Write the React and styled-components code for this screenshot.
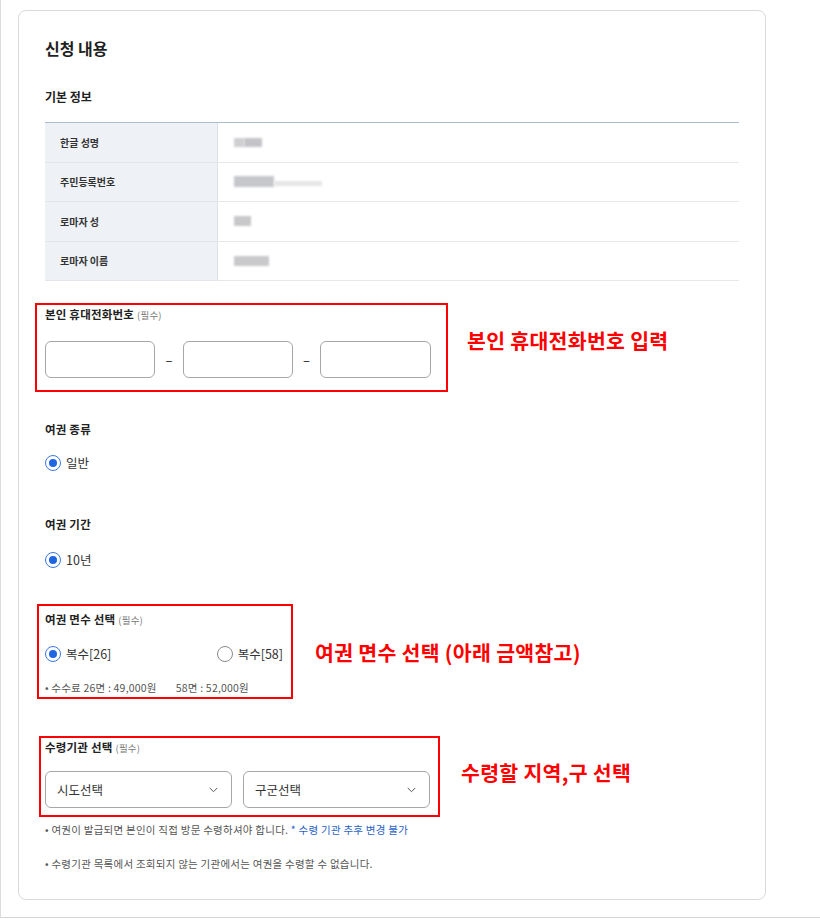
import React from "react";
import styled, { createGlobalStyle } from "styled-components";

const GlobalStyle = createGlobalStyle`
  html, body {
    margin: 0;
    padding: 0;
    background: #ffffff;
  }
  body {
    font-family: "Noto Sans CJK KR", "Noto Sans", "Liberation Sans", sans-serif;
    color: #222;
  }
  * {
    box-sizing: border-box;
  }
`;

const Page = styled.div`
  width: 820px;
  height: 918px;
  border-left: 1px solid #dcdcdc;
  border-bottom: 1px solid #d6d6d6;
  padding: 10px 0 0 17px;
`;

const Card = styled.section`
  width: 748px;
  height: 890px;
  border: 1px solid #dadada;
  border-radius: 8px;
  padding: 24px 26px 0 26px;
  background: #fff;
`;

const Title = styled.h2`
  margin: 0;
  font-size: 16px;
  line-height: 26px;
  font-weight: 700;
  color: #1f1f1f;
`;

const SubTitle = styled.h3`
  margin: 26px 0 0;
  font-size: 12px;
  line-height: 20px;
  font-weight: 700;
  color: #222;
`;

const InfoTable = styled.div`
  margin-top: 15px;
  border-top: 1px solid #a9bcd2;
  display: grid;
  grid-template-columns: 173px 1fr;
`;

const Label = styled.div`
  height: 39.5px;
  background: #eef1f5;
  border-right: 1px solid #dde2ea;
  border-bottom: 1px solid #e2e5ea;
  padding-left: 15px;
  display: flex;
  align-items: center;
  font-size: 10px;
  font-weight: 700;
  color: #333;
`;

const Value = styled.div`
  height: 39.5px;
  border-bottom: 1px solid #e8e8e8;
  padding-left: 16px;
  display: flex;
  align-items: center;
`;

const Blur = styled.span`
  display: inline-block;
  width: ${(p) => p.w}px;
  height: ${(p) => p.h || 9}px;
  background: ${(p) => p.c || "#c9c9cc"};
  filter: blur(1.2px);
  margin-top: ${(p) => p.mt || 0}px;
`;

const AnnotRow = styled.div`
  display: flex;
  align-items: flex-start;
  margin-top: ${(p) => p.mt}px;
`;

const Highlight = styled.div`
  width: ${(p) => p.w}px;
  margin-left: ${(p) => -p.off}px;
  border: 2px solid #ff0000;
  padding: ${(p) => p.pt}px 8px ${(p) => p.pb}px ${(p) => p.off - 2}px;
  flex-shrink: 0;
`;

const Annotation = styled.div`
  margin-left: ${(p) => p.ml}px;
  margin-top: ${(p) => p.mt}px;
  color: #ff0000;
  font-size: 20.5px;
  line-height: 26px;
  font-weight: 700;
  white-space: nowrap;
  letter-spacing: 0.3px;
`;

const FieldLabel = styled.div`
  font-size: 11.5px;
  line-height: 18px;
  font-weight: 700;
  color: #222;
  letter-spacing: 0.2px;
  margin-top: ${(p) => p.mt || 0}px;
`;

const Req = styled.span`
  font-size: 9.5px;
  font-weight: 400;
  color: #777;
  margin-left: 3px;
`;

const PhoneRow = styled.div`
  margin-top: 17px;
  display: grid;
  grid-template-columns: 110px 28px 110px 27px 111px;
  align-items: center;
`;

const TextInput = styled.input`
  height: 37px;
  width: 100%;
  border: 1px solid #a6a6a6;
  border-radius: 6px;
  background: #fff;
  outline: none;
  font-family: inherit;
`;

const Dash = styled.span`
  text-align: center;
  font-size: 13px;
  color: #222;
`;

const RadioRow = styled.div`
  margin-top: ${(p) => p.mt}px;
  display: flex;
  align-items: center;
  justify-content: ${(p) => (p.spread ? "space-between" : "flex-start")};
`;

const RadioItem = styled.label`
  display: flex;
  align-items: center;
  gap: 5px;
  font-size: 12.5px;
  line-height: 16px;
  color: #333;
`;

const Circle = styled.span`
  width: 16px;
  height: 16px;
  border-radius: 50%;
  border: 1.5px solid ${(p) => (p.on ? "#3c78e6" : "#8a8a8a")};
  display: flex;
  align-items: center;
  justify-content: center;
  flex-shrink: 0;

  &::after {
    content: "";
    width: 8px;
    height: 8px;
    border-radius: 50%;
    background: #1f64e0;
    display: ${(p) => (p.on ? "block" : "none")};
  }
`;

const Fee = styled.div`
  margin-top: 18px;
  font-size: 10.5px;
  line-height: 16px;
  color: #555;
  display: flex;
  gap: 19px;
  letter-spacing: 0.2px;
`;

const SelectRow = styled.div`
  margin-top: 14px;
  display: grid;
  grid-template-columns: 187px 187px;
  gap: 11px;
`;

const Select = styled.div`
  height: 37px;
  border: 1px solid #a6a6a6;
  border-radius: 6px;
  padding: 0 13px 0 11px;
  display: flex;
  align-items: center;
  justify-content: space-between;
  font-size: 12.5px;
  color: #333;
`;

const Note = styled.p`
  margin: ${(p) => p.mt}px 0 0;
  font-size: 10.5px;
  line-height: 14px;
  color: #555;
  letter-spacing: 0.25px;
`;

const Blue = styled.span`
  color: #2a62c4;
`;

const Chevron = () => (
  <svg width="9" height="6" viewBox="0 0 9 6" fill="none">
    <path d="M1 1.2l3.5 3.5 3.5-3.5" stroke="#555" strokeWidth="1" strokeLinecap="round" strokeLinejoin="round" />
  </svg>
);

const Radio = ({ on, children }) => (
  <RadioItem>
    <Circle on={on ? 1 : 0} />
    {children}
  </RadioItem>
);

export default function App() {
  return (
    <>
      <GlobalStyle />
      <Page>
        <Card>
          <Title>신청 내용</Title>
          <SubTitle>기본 정보</SubTitle>
          <InfoTable>
            <Label>한글 성명</Label>
            <Value>
              <Blur w={10} c="#cfcfd2" />
              <Blur w={18} c="#c4c4c8" />
            </Value>
            <Label>주민등록번호</Label>
            <Value>
              <Blur w={40} h={11} c="#c5c7cb" />
              <Blur w={48} h={5} c="#e6e6e8" mt={4} />
            </Value>
            <Label>로마자 성</Label>
            <Value>
              <Blur w={17} h={10} c="#c8c8cb" />
            </Value>
            <Label>로마자 이름</Label>
            <Value>
              <Blur w={35} h={10} c="#c9c9cc" />
            </Value>
          </InfoTable>

          <AnnotRow mt={22}>
            <Highlight w={413} off={10} pt={0} pb={12}>
              <FieldLabel>
                본인 휴대전화번호<Req>(필수)</Req>
              </FieldLabel>
              <PhoneRow>
                <TextInput />
                <Dash>–</Dash>
                <TextInput />
                <Dash>–</Dash>
                <TextInput />
              </PhoneRow>
            </Highlight>
            <Annotation ml={19} mt={24}>본인 휴대전화번호 입력</Annotation>
          </AnnotRow>

          <FieldLabel mt={28}>여권 종류</FieldLabel>
          <RadioRow mt={17}>
            <Radio on>일반</Radio>
          </RadioRow>

          <FieldLabel mt={44}>여권 기간</FieldLabel>
          <RadioRow mt={19}>
            <Radio on>10년</Radio>
          </RadioRow>

          <AnnotRow mt={36}>
            <Highlight w={256} off={8} pt={4} pb={1}>
              <FieldLabel>
                여권 면수 선택<Req>(필수)</Req>
              </FieldLabel>
              <RadioRow mt={17} spread>
                <Radio on>복수[26]</Radio>
                <Radio>복수[58]</Radio>
              </RadioRow>
              <Fee>
                <span>• 수수료 26면 : 49,000원</span>
                <span>58면 : 52,000원</span>
              </Fee>
            </Highlight>
            <Annotation ml={22} mt={35}>여권 면수 선택 (아래 금액참고)</Annotation>
          </AnnotRow>

          <AnnotRow mt={37}>
            <Highlight w={401} off={6} pt={0} pb={7}>
              <FieldLabel>
                수령기관 선택<Req>(필수)</Req>
              </FieldLabel>
              <SelectRow>
                <Select>
                  시도선택
                  <Chevron />
                </Select>
                <Select>
                  구군선택
                  <Chevron />
                </Select>
              </SelectRow>
            </Highlight>
            <Annotation ml={21} mt={23}>수령할 지역,구 선택</Annotation>
          </AnnotRow>

          <Note mt={6}>
            • 여권이 발급되면 본인이 직접 방문 수령하셔야 합니다. <Blue>* 수령 기관 추후 변경 불가</Blue>
          </Note>
          <Note mt={20}>• 수령기관 목록에서 조회되지 않는 기관에서는 여권을 수령할 수 없습니다.</Note>
        </Card>
      </Page>
    </>
  );
}
